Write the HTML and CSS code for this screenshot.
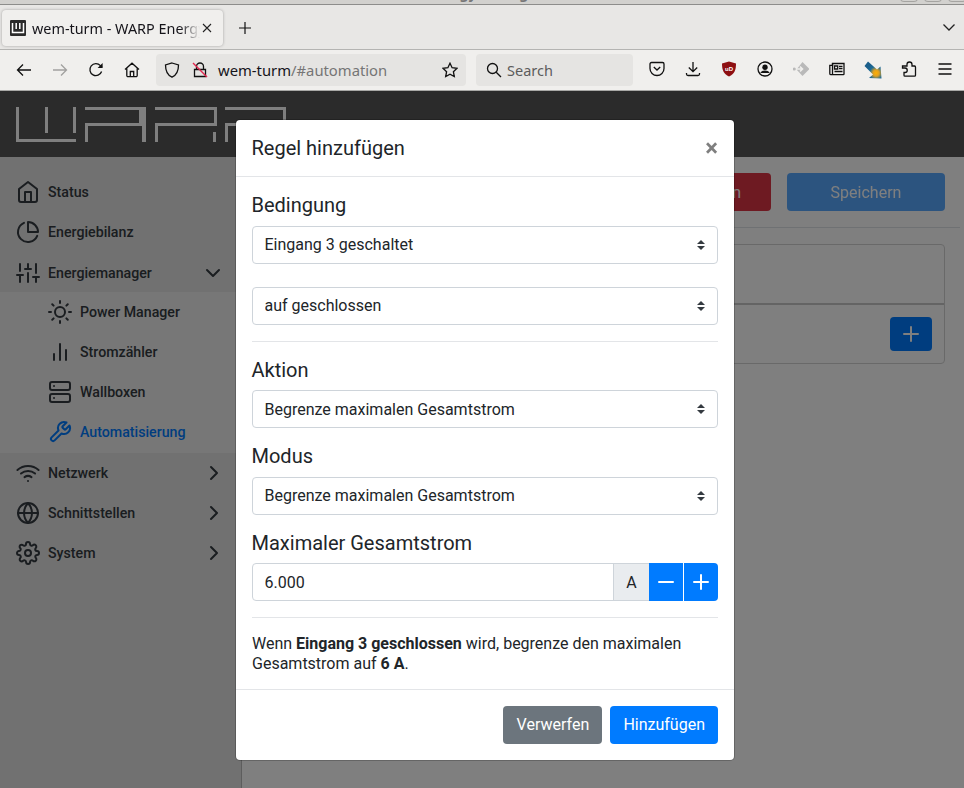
FILE: index.html
```html
<!DOCTYPE html>
<html lang="de">
<head>
<meta charset="utf-8">
<title>wem-turm - WARP Energy Manager</title>
<link rel="stylesheet" href="styles.css">
</head>
<body>

<div class="titlebar">
	<div class="wintitle">wem-turm - WARP Energy Manager — Mozilla Firefox</div>
	<div class="winbtns"><i></i><i></i><i></i></div>
</div>

<div class="tabbar">
	<div class="tab">
		<svg class="favicon" viewBox="0 0 16 16"><rect width="16" height="16" rx="1" fill="#2b2b2b"/><path d="M2.5 3v9.5h11V3M6.2 3v6M9.8 3v6" fill="none" stroke="#fff" stroke-width="1.5"/></svg>
		<span class="tabtitle">wem-turm - WARP Energy Manager</span>
		<svg class="tabclose" viewBox="0 0 10 10"><path d="M1 1l8 8M9 1l-8 8" stroke="#222" stroke-width="1.1" fill="none"/></svg>
	</div>
	<svg class="newtab" viewBox="0 0 12 12"><path d="M6 0v12M0 6h12" stroke="#111" stroke-width="1.2" fill="none"/></svg>
	<svg class="tablist" viewBox="0 0 14 8"><path d="M1.5 1.5L7 7l5.5-5.5" stroke="#222" stroke-width="1.3" fill="none"/></svg>
</div>

<div class="toolbar">
	<div class="navbtns">
		<svg class="tb" viewBox="0 0 16 16"><path d="M15 8H1.5M7 2.5L1.5 8 7 13.5" class="ln"/></svg>
		<svg class="tb faded" viewBox="0 0 16 16"><path d="M1 8h13.5M9 2.5L14.5 8 9 13.5" class="ln"/></svg>
		<svg class="tb" viewBox="0 0 16 16"><path d="M13.6 9.5A6 6 0 1 1 12.4 3.6L14 5.2" class="ln"/><path d="M14.6 1v5h-5z" fill="#111"/></svg>
		<svg class="tb" viewBox="0 0 16 16"><path d="M1 7.5L8 1.2l7 6.3M2.8 6.5v7a1.2 1.2 0 0 0 1.2 1.2h8a1.2 1.2 0 0 0 1.2-1.2v-7M6.3 14.5V9.5h3.4v5" class="ln"/></svg>
	</div>
	<div class="urlbar">
		<svg class="tb shield" viewBox="0 0 16 16"><path d="M8 1L14.5 3c0 6-1.5 10-6.5 12.2C3 13 1.500 9 1.500 3z" class="ln"/></svg>
		<svg class="tb lock" viewBox="0 0 16 16"><path d="M4.500 7V4.500a3.500 3.500 0 0 1 7 0V7M2.500 7.500h11v7h-11z" class="ln"/><path d="M1 1l14 14" stroke="#e22850" stroke-width="1.400"/></svg>
		<span class="urltext"><b>wem-turm</b>/#automation</span>
		<svg class="tb star" viewBox="0 0 16 16"><path d="M8 1.200l2.100 4.500 4.900.6-3.600 3.400.9 4.900L8 12.200l-4.300 2.400.9-4.900L1 6.300l4.900-.6z" class="ln"/></svg>
	</div>
	<div class="searchbar">
		<svg class="tb" viewBox="0 0 16 16"><circle cx="6.500" cy="6.500" r="5" class="ln"/><path d="M10.200 10.200L15 15" class="ln"/></svg>
		<span>Search</span>
	</div>
	<div class="tools">
		<svg class="tb" viewBox="0 0 16 16"><path d="M2.500 1.500h11A1.500 1.500 0 0 1 15 3v4.500a7 7 0 0 1-14 0V3a1.500 1.500 0 0 1 1.500-1.500z" class="ln"/><path d="M4.800 6L8 9l3.200-3" class="ln"/></svg>
		<svg class="tb" viewBox="0 0 16 16"><path d="M8 1v9.500M3.800 6.500L8 10.700l4.200-4.200M1.500 12v1a1.500 1.500 0 0 0 1.500 1.500h10a1.500 1.500 0 0 0 1.500-1.500v-1" class="ln"/></svg>
		<svg class="tb" viewBox="0 0 16 16"><path d="M8 .5L15 2.500c0 6.500-1.500 10.500-7 13C2.500 13 1 9 1 2.500z" fill="#8e0f12"/><text x="8" y="10" class="ublock">uD</text></svg>
		<svg class="tb" viewBox="0 0 16 16"><circle cx="8" cy="8" r="7" class="ln"/><circle cx="8" cy="6.300" r="2.700" fill="#111"/><path d="M3.300 12c1-2 2.600-2.600 4.700-2.600s3.700.6 4.700 2.600z" fill="#111"/></svg>
		<svg class="tb" viewBox="0 0 16 16"><path d="M9.500 1L16.500 8l-7 7-6-6.500z" fill="#b9b9b9"/><path d="M3 8h6.500M7 5.500L9.500 8 7 10.500" stroke="#f0efed" stroke-width="1.600" fill="none"/><circle cx="1.300" cy="8" r="1.500" fill="#b9b9b9"/></svg>
		<svg class="tb" viewBox="0 0 16 16"><path d="M3.500 2.500H15v10.500a.7.7 0 0 1-.7.700H2a1.200 1.200 0 0 1-1.200-1.200V4.300h2.700z" class="ln"/><path d="M3.500 2.500v11M5.500 5h3.200v3H5.500zM10 5.300h3.500M10 7.500h3.500M5.500 10.500h8" class="ln"/></svg>
		<svg class="tb big" viewBox="0 0 18 18"><defs><radialGradient id="arrowfill" cx=".68" cy=".68" r=".6"><stop offset="0" stop-color="#ffb000"/><stop offset=".3" stop-color="#e0a020"/><stop offset=".65" stop-color="#1b6a96"/><stop offset="1" stop-color="#1b5e8a"/></radialGradient></defs><path d="M4 .5L13 8.500 16.500 5.500 17.500 17.500 5 17 9 13.500 .5 5z" fill="url(#arrowfill)"/></svg>
		<svg class="tb" viewBox="0 0 16 16"><path d="M6 3.500A2.500 2.500 0 0 1 11 3.500V5h2.500A1.200 1.200 0 0 1 14.500 6.200v8a1 1 0 0 1-1 1H4a1 1 0 0 1-1-1v-2.700h1a2 2 0 0 0 0-4.500H1.500V5H6z" class="ln"/></svg>
		<svg class="tb" viewBox="0 0 16 16"><path d="M1.500 3h13M1.500 8h13M1.500 13h13" class="ln"/></svg>
	</div>
</div>

<div class="page">
	<header class="header">
		<svg class="logo" viewBox="0 0 270 35"><path d="M0 0h3v32h57v3H0zM29 0h3v26h-3zM57 0h3v26h-3zM69 0h61v35h-4V19H72v16h-3V16h54V3H69zM139 0h62v19h-3V3h-59zM139 16h62v3h-59v16h-3zM197 25h3v10h-3zM209 0h61v35h-3V19h-55v16h-3V16h58V3h-58z"/></svg>
	</header>
	<div class="layout">
		<nav class="sidebar">
			<a class="navitem"><svg class="fi" viewBox="0 0 24 24"><path d="M3 9l9-7 9 7v11a2 2 0 0 1-2 2H5a2 2 0 0 1-2-2z"/><polyline points="9 22 9 12 15 12 15 22"/></svg>Status</a>
			<a class="navitem"><svg class="fi" viewBox="0 0 24 24"><path d="M21.210 15.890A10 10 0 1 1 8 2.830"/><path d="M22 12A10 10 0 0 0 12 2v10z"/></svg>Energiebilanz</a>
			<a class="navitem open"><svg class="fi" viewBox="0 0 24 24"><path d="M4 21v-7M4 10V3M12 21v-9M12 8V3M20 21v-5M20 12V3M1 14h6M9 8h6M17 16h6"/></svg>Energiemanager<svg class="fi caret" viewBox="0 0 24 24"><polyline points="6 9 12 15 18 9"/></svg></a>
			<div class="subnav">
				<a class="navitem sub"><svg class="fi" viewBox="0 0 24 24"><circle cx="12" cy="12" r="5"/><path d="M12 1v2M12 21v2M4.220 4.220l1.420 1.420M18.360 18.360l1.420 1.420M1 12h2M21 12h2M4.220 19.780l1.420-1.420M18.360 5.640l1.420-1.420"/></svg>Power Manager</a>
				<a class="navitem sub"><svg class="fi" viewBox="0 0 24 24"><path d="M18 20V10M12 20V4M6 20v-6"/></svg>Stromzähler</a>
				<a class="navitem sub"><svg class="fi" viewBox="0 0 24 24"><rect x="2" y="2" width="20" height="8" rx="2"/><rect x="2" y="14" width="20" height="8" rx="2"/><path d="M6 6h.01M6 18h.01"/></svg>Wallboxen</a>
				<a class="navitem sub active"><svg class="fi" viewBox="0 0 24 24"><path d="M14.700 6.300a1 1 0 0 0 0 1.400l1.600 1.600a1 1 0 0 0 1.400 0l3.770-3.770a6 6 0 0 1-7.940 7.940l-6.910 6.910a2.120 2.120 0 0 1-3-3l6.910-6.910a6 6 0 0 1 7.940-7.940l-3.760 3.760z"/></svg>Automatisierung</a>
			</div>
			<a class="navitem"><svg class="fi" viewBox="0 0 24 24"><path d="M5 12.550a11 11 0 0 1 14.080 0M1.420 9a16 16 0 0 1 21.160 0M8.530 16.110a6 6 0 0 1 6.950 0M12 20h.01"/></svg>Netzwerk<svg class="fi caret" viewBox="0 0 24 24"><polyline points="9 18 15 12 9 6"/></svg></a>
			<a class="navitem"><svg class="fi" viewBox="0 0 24 24"><circle cx="12" cy="12" r="10"/><path d="M2 12h20M12 2a15.300 15.300 0 0 1 4 10 15.300 15.300 0 0 1-4 10 15.300 15.300 0 0 1-4-10 15.300 15.300 0 0 1 4-10z"/></svg>Schnittstellen<svg class="fi caret" viewBox="0 0 24 24"><polyline points="9 18 15 12 9 6"/></svg></a>
			<a class="navitem"><svg class="fi" viewBox="0 0 24 24"><circle cx="12" cy="12" r="3"/><path d="M19.400 15a1.650 1.650 0 0 0 .33 1.820l.06.06a2 2 0 0 1 0 2.830 2 2 0 0 1-2.830 0l-.06-.06a1.650 1.650 0 0 0-1.820-.33 1.650 1.650 0 0 0-1 1.510V21a2 2 0 0 1-2 2 2 2 0 0 1-2-2v-.09A1.650 1.650 0 0 0 9 19.400a1.650 1.650 0 0 0-1.820.33l-.06.06a2 2 0 0 1-2.830 0 2 2 0 0 1 0-2.830l.06-.06a1.650 1.650 0 0 0 .33-1.820 1.650 1.650 0 0 0-1.510-1H3a2 2 0 0 1-2-2 2 2 0 0 1 2-2h.09A1.650 1.650 0 0 0 4.600 9a1.650 1.650 0 0 0-.33-1.820l-.06-.06a2 2 0 0 1 0-2.830 2 2 0 0 1 2.830 0l.06.06a1.650 1.650 0 0 0 1.820.33H9a1.650 1.650 0 0 0 1-1.510V3a2 2 0 0 1 2-2 2 2 0 0 1 2 2v.09a1.650 1.650 0 0 0 1 1.510 1.650 1.650 0 0 0 1.820-.33l.06-.06a2 2 0 0 1 2.830 0 2 2 0 0 1 0 2.830l-.06.06a1.650 1.650 0 0 0-.33 1.820V9a1.650 1.650 0 0 0 1.510 1H21a2 2 0 0 1 2 2 2 2 0 0 1-2 2h-.09a1.650 1.650 0 0 0-1.510 1z"/></svg>System<svg class="fi caret" viewBox="0 0 24 24"><polyline points="9 18 15 12 9 6"/></svg></a>
		</nav>
		<main class="content">
			<div class="actions">
				<button class="btn danger">Zurücksetzen</button>
				<button class="btn primary save">Speichern</button>
			</div>
			<div class="card">
				<div class="cardtop"></div>
				<div class="cardrow">
					<button class="btn primary addrule"><svg class="fi" viewBox="0 0 24 24"><path d="M12 5v14M5 12h14"/></svg></button>
				</div>
			</div>
		</main>
	</div>

	<div class="backdrop"></div>

	<div class="modal">
		<div class="modal-head">
			<h5>Regel hinzufügen</h5>
			<span class="close">×</span>
		</div>
		<div class="modal-body">
			<label>Bedingung</label>
			<select class="sel first"><option>Eingang 3 geschaltet</option></select>
			<select class="sel"><option>auf geschlossen</option></select>
			<hr class="rule">
			<label class="low">Aktion</label>
			<select class="sel lowtext"><option>Begrenze maximalen Gesamtstrom</option></select>
			<label>Modus</label>
			<select class="sel"><option>Begrenze maximalen Gesamtstrom</option></select>
			<label class="tight">Maximaler Gesamtstrom</label>
			<div class="inputgroup">
				<input class="numinput" value="6.000">
				<span class="unit">A</span>
				<button class="step"><svg class="fi" viewBox="0 0 24 24"><path d="M5 12h14"/></svg></button>
				<button class="step last"><svg class="fi" viewBox="0 0 24 24"><path d="M12 5v14M5 12h14"/></svg></button>
			</div>
			<hr class="rule wide">
			<p class="summary">Wenn <b>Eingang 3 geschlossen</b> wird, begrenze den maximalen Gesamtstrom auf <b>6 A</b>.</p>
		</div>
		<div class="modal-foot">
			<button class="btn secondary">Verwerfen</button>
			<button class="btn primary">Hinzufügen</button>
		</div>
	</div>
</div>

</body>
</html>
```

FILE: styles.css
```css
* {
	box-sizing: border-box;
}

html, body {
	margin: 0;
	height: 100%;
	overflow: hidden;
}

body {
	font-family: Roboto, sans-serif;
	font-size: 16px;
	color: #212529;
	background: #fff;
}

/* browser chrome */
.titlebar {
	height: 5px;
	background: #d2d1ce;
	border-bottom: 1px solid #8d8d8b;
	display: flex;
	justify-content: flex-end;
	overflow: hidden;
	position: relative;
}

.wintitle {
	position: absolute;
	left: 0;
	right: 0;
	top: -15px;
	text-align: center;
	font: 700 14px/18px "Noto Sans", sans-serif;
	color: #777;
	white-space: nowrap;
}

.winbtns {
	display: flex;
	gap: 6px;
	margin-right: -2px;
}

.winbtns i {
	width: 18px;
	height: 4px;
	margin-top: -2px;
	border: 1px solid #a5a4a1;
	border-radius: 0 0 4px 4px;
}

.tabbar {
	height: 45px;
	background: #e8e7e5;
	border-bottom: 1px solid #b4b4b2;
	display: flex;
	align-items: center;
	padding: 0 8px 0 2px;
}

.tab {
	width: 221px;
	height: 36px;
	margin-top: 2px;
	background: #f0efed;
	border-radius: 4px;
	box-shadow: 0 0 3px rgba(0,0,0,.3);
	display: flex;
	align-items: center;
	padding: 0 11px 0 8px;
}

.favicon {
	width: 16px;
	height: 16px;
	flex: none;
}

.tabtitle {
	margin-left: 6px;
	flex: 1;
	overflow: hidden;
	white-space: nowrap;
	font: 14.4px "Noto Sans", sans-serif;
	color: #15141a;
	-webkit-mask-image: linear-gradient(to right, #000 88%, transparent);
	mask-image: linear-gradient(to right, #000 88%, transparent);
}

.tabclose {
	width: 10px;
	height: 10px;
	margin-left: 2px;
	margin-top: -1px;
	flex: none;
}

.newtab {
	width: 12px;
	height: 12px;
	margin-left: 16px;
	margin-top: 1px;
}

.tablist {
	width: 14px;
	height: 8px;
	margin-left: auto;
	margin-top: -1px;
}

.toolbar {
	height: 41px;
	background: #f0efed;
	border-bottom: 1px solid #a8a8a6;
	display: flex;
	align-items: center;
	padding-bottom: 1px;
}

.tb {
	width: 16px;
	height: 16px;
	flex: none;
}

.tb.big {
	width: 18px;
	height: 18px;
	margin: 0 -1px;
}

.ln {
	fill: none;
	stroke: #111;
	stroke-width: 1.300;
}

.faded {
	opacity: .35;
}

.navbtns {
	width: 156px;
	display: flex;
	gap: 20px;
	padding-left: 16px;
}

.urlbar {
	width: 310px;
	height: 32px;
	background: #e5e4e2;
	border-radius: 4px;
	display: flex;
	align-items: center;
	padding: 0 8px;
}

.lock {
	margin-left: 12px;
}

.urltext {
	margin-left: 10px;
	flex: 1;
	font: 14.8px "Noto Sans", sans-serif;
	color: #757575;
	white-space: nowrap;
}

.urltext b {
	font-weight: 400;
	color: #15141a;
}

.searchbar {
	width: 157px;
	height: 32px;
	margin-left: 10px;
	background: #e5e4e2;
	border-radius: 4px;
	display: flex;
	align-items: center;
	padding-left: 10px;
	gap: 5px;
	font: 14.5px "Noto Sans", sans-serif;
	color: #5c5c5c;
}

.tools {
	display: flex;
	gap: 20px;
	margin-left: 16px;
}

.ublock {
	font: 700 6px "Liberation Sans", sans-serif;
	fill: #fff;
	text-anchor: middle;
}

/* page */
.page {
	position: relative;
	height: 697px;
	overflow: hidden;
}

.header {
	height: 66px;
	background: #565656;
	padding: 16px 0 0 16px;
}

.logo {
	display: block;
	width: 270px;
	height: 35px;
	fill: #fff;
}

.layout {
	display: flex;
	height: 631px;
}

.sidebar {
	width: 242px;
	flex: none;
	background: #e2e2e2;
	border-right: 1px solid #bbb;
	padding-top: 15px;
}

.navitem {
	display: flex;
	align-items: center;
	height: 40px;
	padding: 0 16px;
	font-size: 14.2px;
	font-weight: 500;
	color: #343a40;
	white-space: nowrap;
}

.navitem.open {
	padding-top: 2px;
}

.fi {
	width: 24px;
	height: 24px;
	flex: none;
	fill: none;
	stroke: currentColor;
	stroke-width: 2;
	stroke-linecap: round;
	stroke-linejoin: round;
}

.navitem .fi {
	margin-right: 8px;
}

.navitem .caret {
	margin: 0 -1px 0 auto;
}

.navitem.open .caret {
	margin-right: 0;
}

.subnav {
	background: #eee;
	padding-bottom: 1px;
}

.navitem.sub {
	padding-left: 48px;
}

.navitem.active {
	color: #007bff;
}

.content {
	flex: 1;
	padding: 16px 19px 0 0;
	margin-right: 0;
}

.btn {
	height: 38px;
	padding: 0 13px;
	border: 0;
	border-radius: 4px;
	font: 16px Roboto, sans-serif;
	color: #fff;
	white-space: nowrap;
}

.primary {
	background: #007bff;
}

.danger {
	background: #dc3545;
	width: 156px;
}

.secondary {
	background: #6c757d;
}

.actions {
	display: flex;
	justify-content: flex-end;
	gap: 16px;
	padding-bottom: 16px;
	margin-right: -15px;
	padding-right: 15px;
	border-bottom: 1px solid #dee2e6;
}

.save {
	width: 158px;
	opacity: .65;
}

.card {
	margin-top: 16px;
	border: 1px solid #d2d2d2;
	border-radius: 4px;
}

.cardtop {
	height: 60px;
	border-bottom: 2px solid #c8c8c8;
}

.cardrow {
	height: 58px;
	display: flex;
	justify-content: flex-end;
	padding: 12px 12px 0 0;
}

.addrule {
	width: 42px;
	height: 34px;
	padding: 0;
	display: flex;
	align-items: center;
	justify-content: center;
}

/* dialog */
.backdrop {
	position: absolute;
	inset: 0;
	background: rgba(0,0,0,.5);
}

.modal {
	position: absolute;
	left: 236px;
	top: 29px;
	width: 498px;
	height: 640px;
	background: #fff;
	border-radius: 4px;
	box-shadow: 0 0 0 1px rgba(0,0,0,.2);
	display: flex;
	flex-direction: column;
}

.modal-head {
	height: 57px;
	border-bottom: 1px solid #e3e5e8;
	display: flex;
	align-items: center;
	justify-content: space-between;
	padding: 0 16px;
}

h5 {
	margin: 0 0 0 -.5px;
	font-size: 20px;
	font-weight: 400;
}

.close {
	font-size: 24px;
	font-weight: 700;
	color: #000;
	opacity: .5;
}

.modal-body {
	flex: 1;
	padding: 16px 16px 0;
}

label {
	display: block;
	height: 25px;
	line-height: 24px;
	margin: 0 0 8px -.5px;
	font-size: 20px;
}

label.low {
	padding-top: 1px;
}

label.tight {
	margin-bottom: 7px;
}

.sel {
	display: block;
	width: 100%;
	height: 38px;
	margin-bottom: 16px;
	padding: 0 28px 2px 11.5px;
	border: 1px solid #ced4da;
	border-radius: 4px;
	font: 16px Roboto, sans-serif;
	color: #212529;
	appearance: none;
	-webkit-appearance: none;
	background: #fff url("data:image/svg+xml,%3csvg xmlns='http://www.w3.org/2000/svg' width='8' height='10'%3e%3cpath fill='%23343a40' d='M4 0L0 4h8zM4 10L0 6h8z'/%3e%3c/svg%3e") no-repeat right 12px center;
}

.sel.lowtext {
	padding-bottom: 0;
}

.sel.first {
	margin-bottom: 23px;
}

.rule {
	margin: 0 0 15px;
	border: 0;
	border-top: 1px solid #e3e5e8;
}

.rule.wide {
	margin-bottom: 16px;
}

.inputgroup {
	display: flex;
	height: 38px;
	margin-bottom: 16px;
}

.numinput {
	flex: 1;
	min-width: 0;
	padding: 0 11.5px;
	border: 1px solid #ced4da;
	border-radius: 4px 0 0 4px;
	font: 16px Roboto, sans-serif;
	color: #212529;
}

.unit {
	width: 36px;
	margin-left: -1px;
	background: #e9ecef;
	border: 1px solid #ced4da;
	border-right: 0;
	display: flex;
	align-items: center;
	justify-content: center;
}

.step {
	width: 34px;
	padding: 0;
	border: 0;
	background: #007bff;
	color: #fff;
	display: flex;
	align-items: center;
	justify-content: center;
}

.step.last {
	margin-left: 1px;
	border-radius: 0 4px 4px 0;
}

.summary {
	margin: 0;
	line-height: 20px;
}

.modal-foot {
	height: 71px;
	border-top: 1px solid #e3e5e8;
	display: flex;
	justify-content: flex-end;
	align-items: center;
	gap: 8px;
	padding: 0 16px;
}

.modal-foot .btn {
	padding-bottom: 2px;
}

.modal-foot .secondary {
	width: 99px;
}
```
